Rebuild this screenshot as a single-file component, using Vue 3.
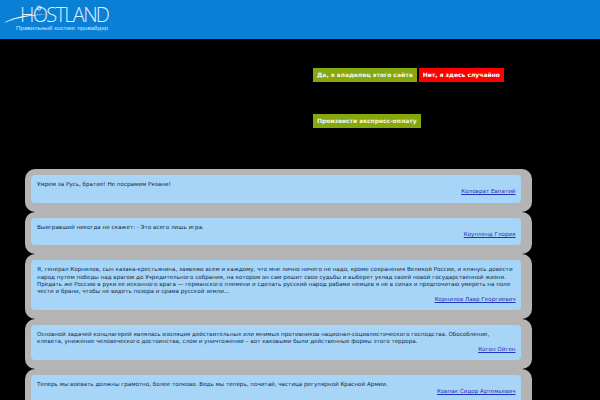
<script setup>
const cards = [
  { text: 'Умрем за Русь, братие! Не посрамим Рязани!', author: 'Коловрат Евпатий', fit: '' },
  { text: 'Выигравший никогда не скажет: - Это всего лишь игра.', author: 'Коупленд Глория', fit: '' },
  { text: 'Я, генерал Корнилов, сын казака-крестьянина, заявляю всем и каждому, что мне лично ничего не надо, кроме сохранения Великой России, и клянусь довести народ путем победы над врагом до Учредительного собрания, на котором он сам решит свои судьбы и выберет уклад своей новой государственной жизни. Предать же Россию в руки ее исконного врага — германского племени и сделать русский народ рабами немцев я не в силах и предпочитаю умереть на поле чести и брани, чтобы не видеть позора и срама русской земли…', author: 'Корнилов Лавр Георгиевич', fit: '' },
  { text: 'Основной задачей концлагерей являлась изоляция действительных или мнимых противников национал-социалистического господства. Обособление, клевета, унижение человеческого достоинства, слом и уничтожение – вот каковыми были действенные формы этого террора.', author: 'Когон Ойген', fit: 'narrow' },
  { text: 'Теперь мы воевать должны грамотно, более толково. Ведь мы теперь, почитай, частица регулярной Красной Армии.', author: 'Ковпак Сидор Артемьевич', fit: '' }
]
</script>

<template>
  <div class="page">
    <header class="top">
      <div class="logo">
        <div class="brand">HOSTLAND</div>
        <svg class="swoosh" width="60" height="26" viewBox="0 0 60 26">
          <path d="M4 23 C14 17 26 14.5 50 14.6 C30 15.2 16 18 4 23Z" fill="#fff" />
          <circle cx="39" cy="8" r="2" fill="none" stroke="#fff" stroke-width="0.8" />
        </svg>
        <div class="tag">Правильный хостинг провайдер</div>
      </div>
    </header>
    <div class="actions">
      <div class="row">
        <a class="btn green">Да, я владелец этого сайта</a>
        <a class="btn red">Нет, я здесь случайно</a>
      </div>
      <div class="row pay">
        <a class="btn green">Произвести экспресс-оплату</a>
      </div>
    </div>
    <div class="list">
      <div v-for="c in cards" :key="c.author" class="card">
        <div class="inner">
          <div class="quote" :class="c.fit">{{ c.text }}</div>
          <a class="author">{{ c.author }}</a>
        </div>
      </div>
    </div>
  </div>
</template>

<style scoped>
.page { width: 600px; height: 400px; overflow: hidden; background: #000; font-family: "DejaVu Sans", sans-serif; }
.top { height: 39px; background: #0a7fd6; }
.logo { position: relative; width: 120px; height: 39px; color: #fff; }
.swoosh { position: absolute; left: 0; top: 0; }
.brand { position: absolute; left: 20px; top: 6px; font: 300 20px/18px "Open Sans", sans-serif; letter-spacing: -1.7px; white-space: nowrap; opacity: 0.88; }
.tag { position: absolute; left: 16px; top: 24px; font: 6.2px/8px "Liberation Sans", sans-serif; color: #cfe6f8; white-space: nowrap; }
.actions { padding: 29px 0 0 313px; height: 130px; box-sizing: border-box; }
.row { display: flex; gap: 2px; }
.pay { margin-top: 32px; }
.btn { display: block; padding: 0 4px; height: 14px; line-height: 14px; font-size: 6px; font-weight: bold; color: #f4f6e8; }
.green { background: #85a80f; }
.red { background: #f00; color: #fff; }
.list { padding: 0 68px 0 25px; display: flex; flex-direction: column; }
.card { background: #b4b4b4; border-radius: 10px; padding: 6px 11px 9px 6px; }
.inner { background: #a6d5f7; border-radius: 4px; padding: 6px 5.5px 6.8px 6px; font-size: 5.62px; line-height: 7.4px; color: #10294a; }
.narrow { margin-right: 8px; }
.author { display: block; text-align: right; color: #2233bb; text-decoration: underline; }
</style>
